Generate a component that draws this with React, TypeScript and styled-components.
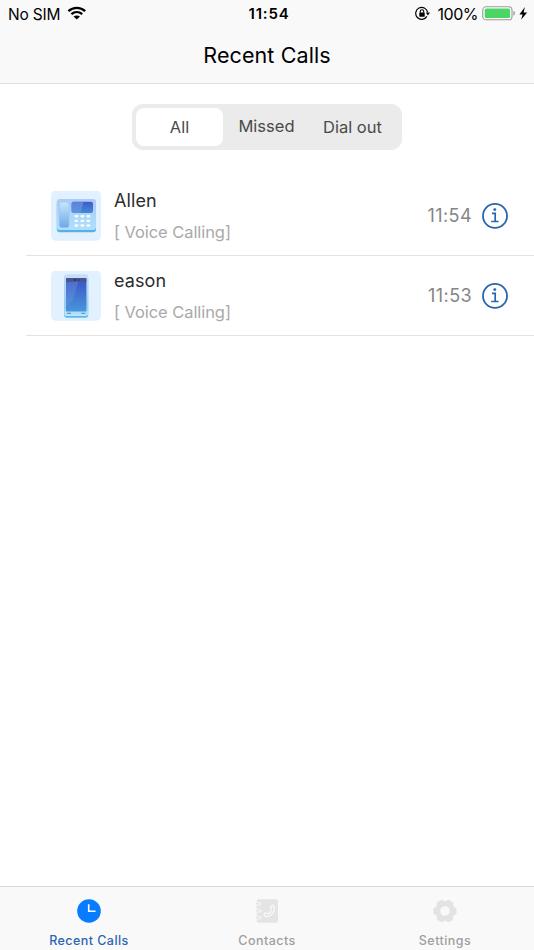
import React from "react";
import styled, { createGlobalStyle } from "styled-components";

const GlobalStyle = createGlobalStyle`
  * { box-sizing: border-box; }
  html, body { margin: 0; padding: 0; background: #fff; }
  body { font-family: Inter, "Liberation Sans", sans-serif; overflow: hidden; }
  svg { display: block; flex: none; }
`;

const Screen = styled.div`
  width: 534px;
  height: 950px;
  display: flex;
  flex-direction: column;
  background: #fff;
  color: #000;
`;

const Header = styled.header`
  height: 84px;
  flex: none;
  background: #f9f9f9;
  border-bottom: 1px solid #dfdfdf;
`;

const StatusBar = styled.div`
  display: grid;
  grid-template-columns: 1fr auto 1fr;
  align-items: center;
  height: 28px;
  padding: 0 6px 0 8px;
  font-size: 16px;
  line-height: 28px;
`;

const StatusGroup = styled.div<{ $end?: boolean }>`
  display: flex;
  align-items: center;
  height: 28px;
  justify-content: ${(p) => (p.$end ? "flex-end" : "flex-start")};
`;

const Carrier = styled.span`
  width: 59px;
  padding-top: 2px;
  font-size: 15.5px;
  line-height: 20px;
  letter-spacing: -0.2px;
  white-space: nowrap;
`;

const Clock = styled.span`
  padding-left: 2px;
  font-size: 15px;
  font-weight: 600;
  letter-spacing: 0.8px;
`;

const Percent = styled.span`
  margin: 0 4px 0 8px;
  font-size: 16px;
  letter-spacing: -0.5px;
`;

const Title = styled.h1`
  margin: 0;
  padding-top: 12px;
  text-align: center;
  font-size: 21.5px;
  line-height: 30px;
  font-weight: 400;
  letter-spacing: 0.1px;
`;

const Main = styled.main`
  flex: 1;
  display: flex;
  flex-direction: column;
`;

const Segments = styled.div`
  display: flex;
  width: 270px;
  height: 46px;
  margin: 20px 0 0 132px;
  padding: 4px;
  border-radius: 11px;
  background: #ebebeb;
`;

const Segment = styled.button<{ $width: number; $active?: boolean; $raised?: boolean }>`
  width: ${(p) => p.$width}px;
  height: 38px;
  flex: none;
  border: 0;
  padding: 0 0 ${(p) => (p.$raised ? 2 : 0)}px;
  border-radius: 8px;
  background: ${(p) => (p.$active ? "#fff" : "transparent")};
  color: #4a4a4a;
  font: 400 16.5px/36px Inter, sans-serif;
  letter-spacing: 0;
`;

const List = styled.ul`
  list-style: none;
  margin: 26px 0 0 26px;
  padding: 0;
`;

const Row = styled.li`
  display: flex;
  align-items: center;
  height: 80px;
  padding: 0 26px 0 25px;
  border-bottom: 1px solid #e3e3e3;
`;

const Details = styled.div`
  flex: 1;
  margin-left: 13px;
  padding-top: 1px;
`;

const Name = styled.div`
  font-size: 18px;
  line-height: 24px;
  color: #2d2d2d;
  letter-spacing: 0.1px;
`;

const Kind = styled.div`
  margin-top: 7px;
  font-size: 16.5px;
  line-height: 24px;
  color: #a9a9a9;
  letter-spacing: -0.07px;
`;

const Time = styled.span`
  margin-right: 10px;
  font-size: 18px;
  letter-spacing: 0.4px;
  color: #858585;
`;

const TabBar = styled.nav`
  display: grid;
  grid-template-columns: repeat(3, 1fr);
  height: 64px;
  flex: none;
  background: #f9f9f9;
  border-top: 1px solid #d9d9d9;
`;

const Tab = styled.div<{ $active?: boolean }>`
  display: flex;
  flex-direction: column;
  align-items: center;
  padding-top: 12px;
  font-size: 12.5px;
  font-weight: 500;
  line-height: 18px;
  letter-spacing: 0.45px;
  color: ${(p) => (p.$active ? "#2c66b1" : "#a0a0a0")};
`;

const TabLabel = styled.span`
  margin-top: 9px;
`;

const WifiIcon = () => (
  <svg width="20" height="16" viewBox="0 0 20 16">
    <path d="M1.4 5.1C6.2.7 13.4.7 18.2 5.1M4.4 8.2c3.2-2.8 7.6-2.8 10.8 0" fill="none" stroke="#000" strokeWidth="2.3" />
    <path d="M9.8 13.6 6.6 10.5c2-1.4 4.4-1.4 6.4 0Z" />
  </svg>
);

const RotationLockIcon = () => (
  <svg width="15" height="16" viewBox="0 0 15 16" fill="none" stroke="#000">
    <path d="M11.9 10.4a6 6 0 1 1 .7-4.2" strokeWidth="1.2" />
    <path d="M10.8 6.5h4.2L12.9 9.6Z" fill="#000" stroke="none" />
    <rect x="4.3" y="6.5" width="5.4" height="4.2" rx=".4" fill="#000" stroke="none" />
    <path d="M5.3 6.7V5.5a1.7 1.7 0 0 1 3.4 0v1.2" strokeWidth="1.1" />
  </svg>
);

const BatteryIcon = () => (
  <svg width="46" height="16" viewBox="0 0 46 16">
    <rect x=".8" y=".8" width="29.2" height="13" rx="3.4" fill="#fff" stroke="#999" strokeWidth="1.1" />
    <rect x="2.7" y="2.6" width="25.4" height="9.4" rx="1.6" fill="#4bd663" />
    <path d="M31.4 5c2 .5 2 4.1 0 4.6Z" fill="#999" />
    <path d="M42.9 1.1 37.4 8.4h3.2l-1.5 5.4 6-7.4h-3.5Z" />
  </svg>
);

const DeskPhoneIcon = () => (
  <svg width="50" height="50" viewBox="0 0 50 50">
    <defs>
      <linearGradient id="deskBody" x1="0" y1="0" x2="0" y2="1">
        <stop stopColor="#afc9f5" /><stop offset="1" stopColor="#aee0fe" />
      </linearGradient>
      <linearGradient id="deskHandset" x1="0" y1="0" x2="0" y2="1">
        <stop stopColor="#c6e7fd" /><stop offset="1" stopColor="#6ea8e6" />
      </linearGradient>
      <linearGradient id="deskDisplay" x1="0" y1="0" x2="0" y2="1">
        <stop stopColor="#3d5bc8" /><stop offset="1" stopColor="#438cd6" />
      </linearGradient>
    </defs>
    <rect x=".5" y=".2" width="49" height="49" rx="4" fill="#e1f1ff" stroke="#d8ecfc" strokeWidth=".7" />
    <rect x="5.8" y="10" width="39.2" height="31.2" rx="3" fill="#58aee6" />
    <rect x="5.8" y="8" width="39.2" height="31" rx="3" fill="url(#deskBody)" />
    <rect x="8.4" y="11" width="9.6" height="25.6" rx="2.6" fill="url(#deskHandset)" stroke="#90c1ee" strokeWidth=".5" />
    <rect x="20.5" y="10.8" width="21.5" height="11.2" rx="2" fill="url(#deskDisplay)" />
    <path d="M22.4 10.8h10.3l-3.2 11.2h-7.1a2 2 0 0 1-1.9-2v-7.2a2 2 0 0 1 1.9-2Z" fill="#719ce3" opacity=".6" />
    {[25.2, 29.9, 34.5].map((y) =>
      [25.4, 31.4, 37.4].map((x) => (
        <rect key={`${x}-${y}`} x={x - 1.9} y={y - 1.2} width="3.8" height="2.4" rx="1.1" fill="#f8fdff" />
      ))
    )}
  </svg>
);

const MobilePhoneIcon = () => (
  <svg width="50" height="50" viewBox="0 0 50 50">
    <defs>
      <linearGradient id="mobileDisplay" x1="0" y1="0" x2="0" y2="1">
        <stop stopColor="#3a51c3" /><stop offset="1" stopColor="#4896dc" />
      </linearGradient>
      <linearGradient id="mobileBody" x1="0" y1="0" x2="0" y2="1">
        <stop stopColor="#c6defa" /><stop offset=".8" stopColor="#9dccf4" /><stop offset="1" stopColor="#b7ebff" />
      </linearGradient>
    </defs>
    <rect x=".5" y=".2" width="49" height="49" rx="4" fill="#e1f1ff" stroke="#d8ecfc" strokeWidth=".7" />
    <rect x="13.2" y="5" width="24" height="41.8" rx="2.8" fill="#60b6e8" />
    <rect x="13.2" y="3.2" width="24" height="41.8" rx="2.8" fill="url(#mobileBody)" />
    <rect x="15" y="7" width="20.4" height="33.4" rx="1" fill="url(#mobileDisplay)" />
    <path d="M15 10.6h12.4L22.5 28.6l-7.5 7Z" fill="#77a1e6" opacity=".3" />
    <path d="M15 7.4h20.4v3.3H15Z" fill="#4b5783" />
    <path d="M23 9h2M27 9h1.3" stroke="#252f5b" strokeWidth="1.4" />
    <path d="M16 42.3h4M30.3 42.3h4" stroke="#7296b5" strokeWidth="1.2" />
  </svg>
);

const InfoIcon = () => (
  <svg width="26" height="26" viewBox="0 0 26 26" fill="none" stroke="#2864b0">
    <circle cx="13" cy="12.9" r="12" strokeWidth="1.8" />
    <circle cx="12.8" cy="6.6" r="1.45" fill="#2864b0" stroke="none" />
    <path d="M10 10.3h3.2v8.2M9.2 18.5h7.4" strokeWidth="1.7" />
  </svg>
);

const ClockIcon = () => (
  <svg width="24" height="24" viewBox="0 0 24 24">
    <circle cx="12" cy="12" r="11.8" fill="#087cff" />
    <path d="M11.7 5.2v7.1h6.8" fill="none" stroke="#fff" strokeWidth="1.6" />
  </svg>
);

const ContactsIcon = () => (
  <svg width="24" height="24" viewBox="0 0 24 24">
    <rect x="1.7" y=".2" width="21.3" height="23.6" rx="2" fill="#e4e4e4" />
    {[4.8, 11.8, 18.8].map((y) => (
      <g key={y} fill="none">
        <path d={`M.5 ${y}h3.8`} stroke="#f9f9f9" strokeWidth="3" />
        <path d={`M.8 ${y}h3.8`} stroke="#dedede" strokeWidth="1.4" />
        <circle cx="5.1" cy={y} r="1.1" stroke="#f9f9f9" strokeWidth=".8" />
      </g>
    ))}
    <path
      d="M18 6.5c2.2 1.5 1.7 5-.3 7.6-2.2 2.9-5.5 4.3-7.7 3.1-1.6-.8-1-2.8.5-3.2 1.3-.3 1.9 1.1 3 .5 1.2-.7 2.3-2 2.7-3.3.3-1.1-.8-1.5-.6-2.6.3-1.5 1.4-2.8 2.4-2.1Z"
      fill="none"
      stroke="#f9f9f9"
      strokeWidth="1.3"
    />
  </svg>
);

const GearIcon = () => (
  <svg width="24" height="24" viewBox="0 0 24 24" fill="#e3e3e3">
    <circle cx="12" cy="12" r="10" />
    {[0, 60, 120, 180, 240, 300].map((angle) => (
      <rect key={angle} x="14" y="8.2" width="9.6" height="7.6" rx="2.6" transform={`rotate(${angle} 12 12)`} />
    ))}
    <circle cx="12" cy="12" r="4.8" fill="#f9f9f9" />
  </svg>
);

const calls = [
  { name: "Allen", time: "11:54", Icon: DeskPhoneIcon },
  { name: "eason", time: "11:53", Icon: MobilePhoneIcon },
];

export default function App() {
  return (
    <Screen>
      <GlobalStyle />
      <Header>
        <StatusBar>
          <StatusGroup><Carrier>No SIM</Carrier><WifiIcon /></StatusGroup>
          <Clock>11:54</Clock>
          <StatusGroup $end><RotationLockIcon /><Percent>100%</Percent><BatteryIcon /></StatusGroup>
        </StatusBar>
        <Title>Recent Calls</Title>
      </Header>
      <Main>
        <Segments>
          <Segment $width={87} $active>All</Segment>
          <Segment $width={87} $raised>Missed</Segment>
          <Segment $width={85}>Dial out</Segment>
        </Segments>
        <List>
          {calls.map(({ name, time, Icon }) => (
            <Row key={name}>
              <Icon />
              <Details><Name>{name}</Name><Kind>[ Voice Calling]</Kind></Details>
              <Time>{time}</Time>
              <InfoIcon />
            </Row>
          ))}
        </List>
      </Main>
      <TabBar>
        <Tab $active><ClockIcon /><TabLabel>Recent Calls</TabLabel></Tab>
        <Tab><ContactsIcon /><TabLabel>Contacts</TabLabel></Tab>
        <Tab><GearIcon /><TabLabel>Settings</TabLabel></Tab>
      </TabBar>
    </Screen>
  );
}
